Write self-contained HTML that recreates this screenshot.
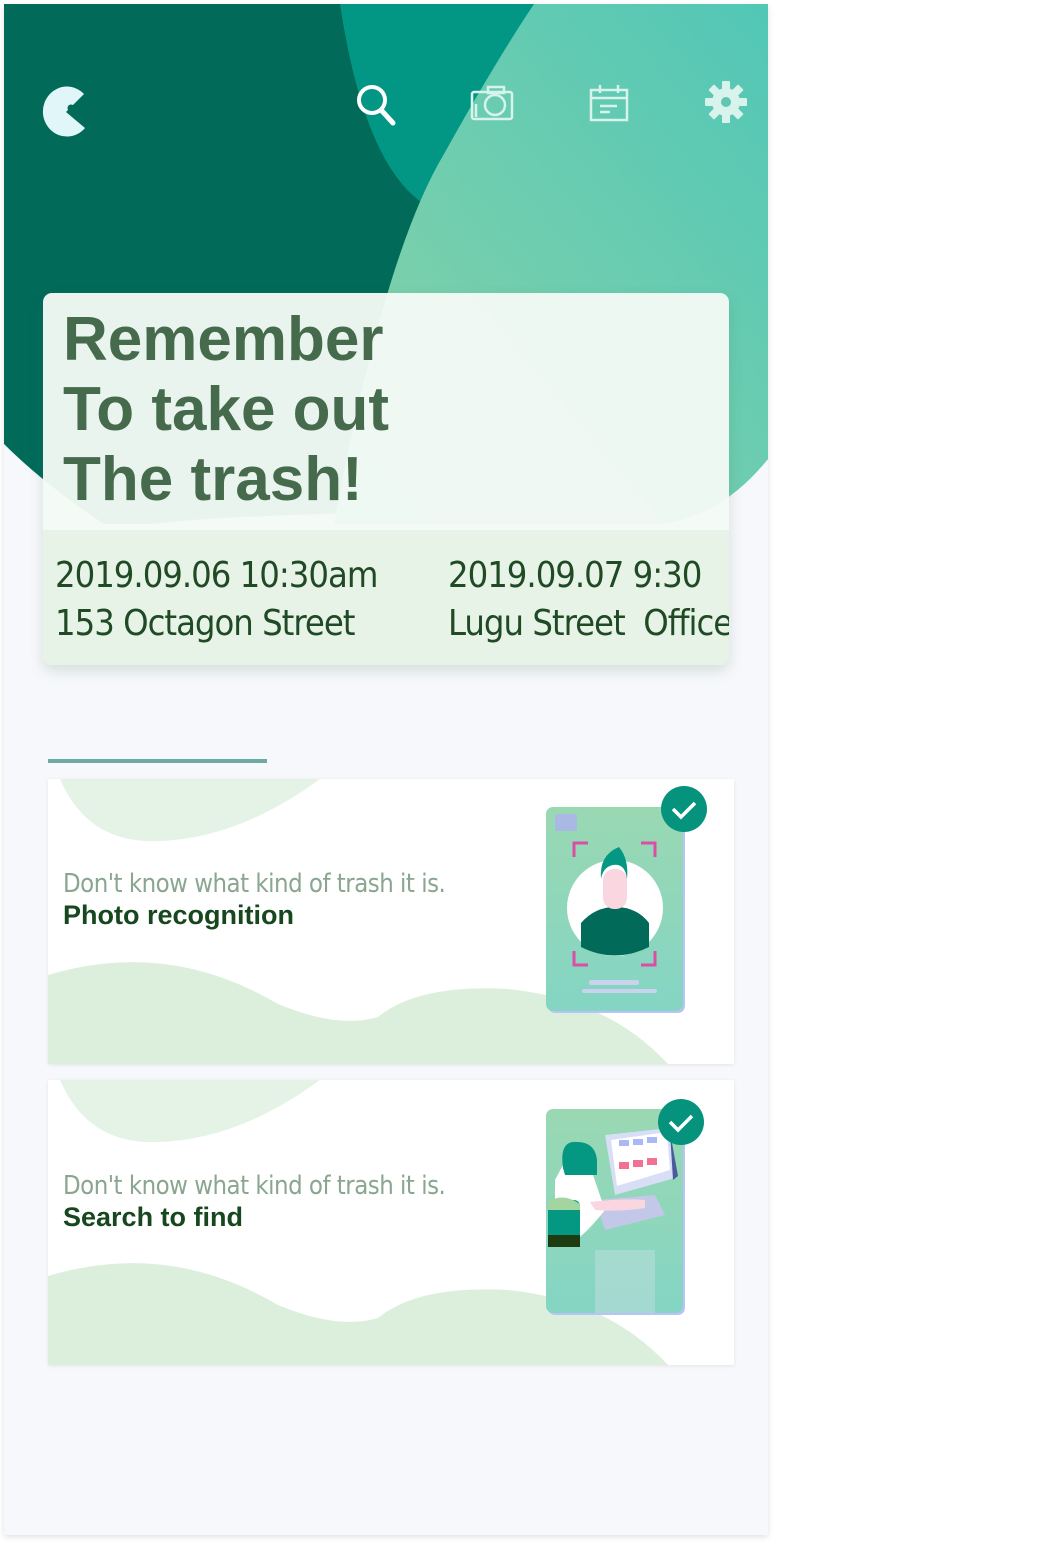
<!DOCTYPE html>
<html><head><meta charset="utf-8"><style>
*{margin:0;padding:0;box-sizing:border-box}
body{width:1047px;height:1547px;background:#fff;position:relative;overflow:hidden;font-family:"Liberation Sans","DejaVu Sans",sans-serif}
.phone{position:absolute;left:4px;top:4px;width:764px;height:1531px;background:#f7f8fb;overflow:hidden;box-shadow:0 2px 6px rgba(0,0,0,.12)}
.abs{position:absolute}
.card{position:absolute;left:39px;top:289px;width:686px;height:372px;border-radius:9px;overflow:hidden;box-shadow:0 6px 14px rgba(60,110,90,.18)}
.title{position:absolute;left:20px;top:12px;font-weight:bold;font-size:62px;line-height:70px;color:#466a4c;font-family:"Liberation Sans",sans-serif}
.d{position:absolute;font-size:36px;color:#1f4a25;letter-spacing:-1px;font-family:"DejaVu Sans Condensed","DejaVu Sans",sans-serif;white-space:nowrap}
.fc{position:absolute;left:44px;width:686px;height:285px;background:#fff;overflow:hidden;box-shadow:0 1px 4px rgba(0,0,0,.08)}
.sub{position:absolute;left:15px;font-size:25.5px;color:#8aa690;font-family:"DejaVu Sans Condensed",sans-serif;letter-spacing:-0.5px;white-space:nowrap}
.bt{position:absolute;left:15px;font-size:27px;color:#17471e;font-weight:bold;font-family:"Liberation Sans",sans-serif}
</style></head><body>
<div class="phone">
<svg class="abs" style="left:0;top:0" width="764" height="520" viewBox="0 0 764 520">
<defs><linearGradient id="lg" x1="1" y1="0" x2="0" y2="1"><stop offset="0" stop-color="#52c7b6"/><stop offset="1" stop-color="#8ad3a8"/></linearGradient></defs>
<path d="M0 0H764V455C700 520 300 500 150 520H0V455Z" fill="#016a59"/>
<path d="M0 440Q40 480 100 520H0Z" fill="#f7f8fb"/>
<path d="M336 0Q360 160 420 200L490 150 530 0Z" fill="#029784"/>
<path d="M530 0H764V455Q720 510 660 520H330Q380 250 440 150Q490 60 530 0Z" fill="url(#lg)"/>
<path d="M80 96 A24 25 0 1 0 81 130 L62 114 Z" fill="#e0f6f8" transform="translate(0,-6)"/>
<circle cx="67" cy="104" r="3.5" fill="#016a59"/>
<circle cx="368" cy="96" r="13" fill="none" stroke="#fff" stroke-width="4"/>
<line x1="378" y1="107" x2="389" y2="119" stroke="#fff" stroke-width="5" stroke-linecap="round"/>
<g fill="none" stroke="#d8f2ec" stroke-width="2.5"><rect x="468" y="88" width="40" height="27" rx="2"/><rect x="484" y="83" width="16" height="6"/><circle cx="491" cy="101" r="10"/><line x1="472" y1="100" x2="472" y2="113"/></g>
<g fill="none" stroke="#d8f2ec" stroke-width="2.5"><rect x="587" y="86" width="36" height="30"/><line x1="587" y1="94" x2="623" y2="94"/><line x1="596" y1="81" x2="596" y2="89"/><line x1="614" y1="81" x2="614" y2="89"/><line x1="596" y1="102" x2="613" y2="102"/><line x1="596" y1="108" x2="606" y2="108"/></g>
<g transform="translate(722,98)" fill="#d8f2ec"><circle r="14"/>
<rect x="-4" y="-21" width="8" height="42" rx="1"/><rect x="-4" y="-21" width="8" height="42" rx="1" transform="rotate(45)"/><rect x="-4" y="-21" width="8" height="42" rx="1" transform="rotate(90)"/><rect x="-4" y="-21" width="8" height="42" rx="1" transform="rotate(135)"/>
<circle r="5" fill="#5fc7b1"/></g>
</svg>
<div class="card">
<div class="abs" style="left:0;top:0;width:686px;height:237px;background:rgba(244,250,246,.96)"></div>
<div class="abs" style="left:0;top:237px;width:686px;height:135px;background:#e8f3e8"></div>
<div class="title">Remember<br>To take out<br>The trash!</div>
<div class="d" style="left:12px;top:262px">2019.09.06 10:30am</div>
<div class="d" style="left:12px;top:310px">153 Octagon Street</div>
<div class="d" style="left:405px;top:262px">2019.09.07 9:30</div>
<div class="d" style="left:405px;top:310px">Lugu Street&nbsp; Office</div>
</div>
<div class="abs" style="left:44px;top:755px;width:219px;height:4px;background:#6fa9a3"></div>

<div class="fc" style="top:775px">
<svg class="abs" style="left:0;top:0" width="686" height="285">
<path d="M12 0Q40 65 110 62Q190 60 272 0Z" fill="#e5f3e7"/>
<path d="M0 196Q120 160 230 225Q290 250 330 238Q370 205 460 210Q560 220 620 285H0Z" fill="#dcefdc"/>
</svg>
<div class="sub" style="top:90px">Don't know what kind of trash it is.</div>
<div class="bt" style="top:121px">Photo recognition</div>
<svg class="abs" style="left:497px;top:0" width="170" height="240">
<defs><linearGradient id="cg" x1="0" y1="0" x2="0" y2="1"><stop offset="0" stop-color="#9ad8b2"/><stop offset="1" stop-color="#84d5c4"/></linearGradient></defs>
<rect x="3" y="30" width="137" height="204" rx="7" fill="#b9c3f7"/>
<rect x="1" y="28" width="137" height="204" rx="7" fill="url(#cg)"/>
<rect x="10" y="35" width="22" height="17" rx="2" fill="#aab8e4"/>
<g stroke="#d94fa6" stroke-width="3" fill="none"><path d="M29 78V64H43"/><path d="M96 64H110V78"/><path d="M29 172V186H43"/><path d="M96 186H110V172"/></g>
<circle cx="70" cy="129" r="48" fill="#fff"/>
<path d="M36 144Q50 128 70 128Q92 128 104 144V168Q70 185 36 168Z" fill="#016a59"/>
<rect x="58" y="90" width="24" height="40" rx="11" fill="#f9d6e0"/>
<path d="M56 100Q54 76 74 68Q84 80 82 100Q80 84 68 86Q58 88 56 100Z" fill="#049883"/>
<rect x="44" y="201" width="50" height="5" rx="2" fill="#c9d3ee"/>
<rect x="37" y="210" width="75" height="4" rx="2" fill="#c9d3ee"/>
<circle cx="139" cy="30" r="23" fill="#05937e"/>
<path d="M128 30L136 38L150 24" stroke="#fff" stroke-width="3.5" fill="none"/>
</svg>
</div>

<div class="fc" style="top:1076px">
<svg class="abs" style="left:0;top:0" width="686" height="285">
<path d="M12 0Q40 65 110 62Q190 60 272 0Z" fill="#e5f3e7"/>
<path d="M0 196Q120 160 230 225Q290 250 330 238Q370 205 460 210Q560 220 620 285H0Z" fill="#dcefdc"/>
</svg>
<div class="sub" style="top:91px">Don't know what kind of trash it is.</div>
<div class="bt" style="top:122px">Search to find</div>
<svg class="abs" style="left:497px;top:0" width="170" height="240">
<rect x="3" y="31" width="137" height="204" rx="7" fill="#b9c3f7"/>
<rect x="1" y="29" width="137" height="204" rx="7" fill="url(#cg)"/>
<path d="M50 170H110V233H50Z" fill="#b8dcd8" opacity=".6"/>
<path d="M60 55L125 48L130 98L70 115Z" fill="#d8def6"/>
<path d="M66 60L122 52L125 90L72 106Z" fill="#fff"/>
<g fill="#aab8f8"><rect x="74" y="60" width="10" height="6"/><rect x="88" y="59" width="10" height="6"/><rect x="102" y="57" width="10" height="6"/></g>
<g fill="#f27193"><rect x="74" y="82" width="10" height="7"/><rect x="88" y="80" width="10" height="7"/><rect x="102" y="78" width="10" height="7"/></g>
<path d="M125 52L133 96L128 100Z" fill="#4a5a9a"/>
<path d="M50 120L110 115L120 135L60 150Z" fill="#c3c8e8"/>
<path d="M18 85Q30 80 48 95L60 130Q40 155 30 160H10V100Z" fill="#fff"/>
<path d="M45 122Q80 118 100 120L100 128Q75 132 50 130Z" fill="#f9d6e0"/>
<rect x="3" y="120" width="32" height="45" rx="6" fill="#049883"/>
<path d="M3 122Q18 112 35 124V130H3Z" fill="#a2d5a0"/>
<rect x="3" y="155" width="32" height="12" fill="#1e3c12"/>
<path d="M18 88Q14 60 32 62Q50 62 52 80V95H20Z" fill="#049883"/>
<circle cx="136" cy="42" r="23" fill="#05937e"/>
<path d="M125 42L133 50L147 36" stroke="#fff" stroke-width="3.5" fill="none"/>
</svg>
</div>
</div>
</body></html>
